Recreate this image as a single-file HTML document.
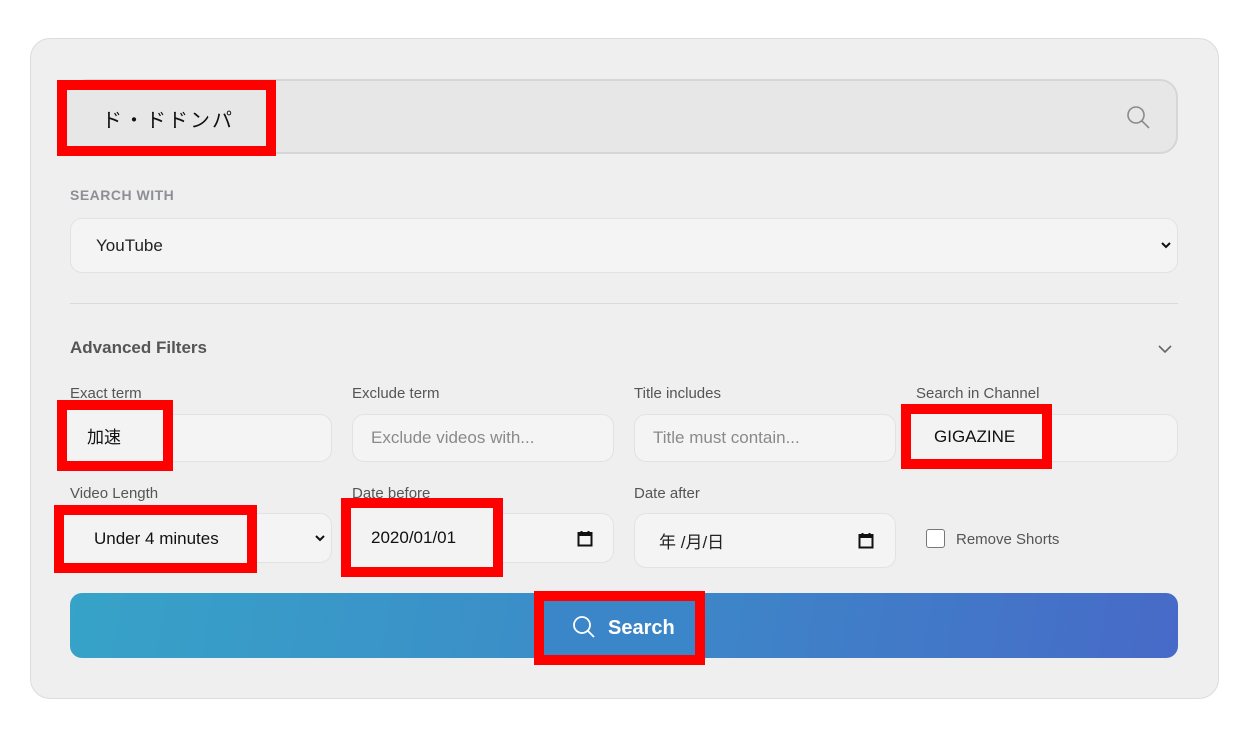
<!DOCTYPE html>
<html><head><meta charset="utf-8"><style>
*{box-sizing:border-box;margin:0;padding:0}
body{width:1254px;height:735px;background:#fff;font-family:"Liberation Sans","Noto Sans CJK JP",sans-serif;position:relative;overflow:hidden}
.a{position:absolute}
.card{left:30px;top:38px;width:1189px;height:661px;background:#efefef;border:1px solid #dcdcdc;border-radius:20px}
.inp{background:#f4f4f4;border:1px solid #e2e2e2;border-radius:12px;font-size:17px;color:#222;display:flex;align-items:center;padding-left:18px}
.ph{color:#8a8a8a}
.lab{font-size:15px;color:#555}
.red{border:10px solid #ff0000;background:#f3f3f3;display:flex;align-items:center;font-size:17px;color:#111}
</style></head><body>
<div class="a card"></div>
<div class="a" style="left:70px;top:79px;width:1108px;height:75px;background:#e7e7e7;border:2px solid #d6d6d6;border-radius:18px"></div>
<svg class="a" style="left:1125px;top:104px" width="26" height="26" viewBox="0 0 26 26"><circle cx="11" cy="11" r="8" fill="none" stroke="#8a8a8a" stroke-width="1.6"/><path d="M17 17l7 7" stroke="#8a8a8a" stroke-width="1.6"/></svg>
<div class="a red" style="left:57px;top:80px;width:219px;height:76px;background:#e7e7e7;padding-left:35px;font-size:20px;letter-spacing:2px">ド・ドドンパ</div>

<div class="a" style="left:70px;top:187px;font-size:14px;font-weight:bold;color:#8d8f95;letter-spacing:.5px">SEARCH WITH</div>
<div class="a inp" style="left:70px;top:218px;width:1108px;height:55px;padding-left:25px">YouTube</div>
<svg class="a" style="left:1160px;top:240px" width="12" height="10" viewBox="0 0 12 10"><path d="M2 3l4 4 4-4" fill="none" stroke="#111" stroke-width="2"/></svg>
<div class="a" style="left:70px;top:303px;width:1108px;height:1px;background:#dadada"></div>

<div class="a" style="left:70px;top:338px;font-size:17px;font-weight:bold;color:#555">Advanced Filters</div>
<svg class="a" style="left:1157px;top:343px" width="16" height="12" viewBox="0 0 16 12"><path d="M2 3l6 6 6-6" fill="none" stroke="#666" stroke-width="1.6"/></svg>

<div class="a lab" style="left:70px;top:385px">Exact term</div>
<div class="a lab" style="left:352px;top:385px">Exclude term</div>
<div class="a lab" style="left:634px;top:385px">Title includes</div>
<div class="a lab" style="left:916px;top:385px">Search in Channel</div>
<div class="a inp" style="left:70px;top:414px;width:262px;height:48px"></div>
<div class="a inp ph" style="left:352px;top:414px;width:262px;height:48px">Exclude videos with...</div>
<div class="a inp ph" style="left:634px;top:414px;width:262px;height:48px">Title must contain...</div>
<div class="a inp" style="left:916px;top:414px;width:262px;height:48px"></div>
<div class="a red" style="left:57px;top:400px;width:116px;height:71px;padding-left:20px">加速</div>
<div class="a red" style="left:901px;top:404px;width:151px;height:65px;padding-left:23px">GIGAZINE</div>

<div class="a lab" style="left:70px;top:485px">Video Length</div>
<div class="a lab" style="left:352px;top:485px">Date before</div>
<div class="a lab" style="left:634px;top:485px">Date after</div>
<div class="a inp" style="left:70px;top:513px;width:262px;height:50px"></div>
<svg class="a" style="left:314px;top:533px" width="12" height="10" viewBox="0 0 12 10"><path d="M2 3l4 4 4-4" fill="none" stroke="#111" stroke-width="2"/></svg>
<div class="a inp" style="left:352px;top:513px;width:262px;height:50px"></div>
<div class="a inp" style="left:634px;top:513px;width:262px;height:55px;padding-left:24px">年 /月/日</div>
<svg class="a" style="left:577px;top:530px" width="16" height="17" viewBox="0 0 16 17"><rect x="1.5" y="3" width="13" height="12.5" fill="none" stroke="#111" stroke-width="2"/><rect x="1.5" y="3" width="13" height="3" fill="#111"/><path d="M4.5 1v3M11.5 1v3" stroke="#111" stroke-width="2"/></svg>
<svg class="a" style="left:858px;top:532px" width="16" height="17" viewBox="0 0 16 17"><rect x="1.5" y="3" width="13" height="12.5" fill="none" stroke="#111" stroke-width="2"/><rect x="1.5" y="3" width="13" height="3" fill="#111"/><path d="M4.5 1v3M11.5 1v3" stroke="#111" stroke-width="2"/></svg>
<div class="a red" style="left:54px;top:505px;width:203px;height:68px;padding-left:30px">Under 4 minutes</div>
<div class="a red" style="left:341px;top:498px;width:162px;height:79px;padding-left:20px">2020/01/01</div>
<div class="a" style="left:926px;top:529px;width:19px;height:19px;border:1.5px solid #777;border-radius:3px;background:#fff"></div>
<div class="a" style="left:956px;top:531px;font-size:15px;color:#555">Remove Shorts</div>

<div class="a" style="left:70px;top:593px;width:1108px;height:65px;border-radius:12px;background:linear-gradient(100deg,#37a3c8 0%,#3c8ac8 50%,#476ac8 100%)"></div>
<div class="a red" style="left:534px;top:591px;width:171px;height:74px;background:#3b86c8;color:#fff;font-weight:bold;font-size:20px;padding-left:64px">Search</div>
<svg class="a" style="left:571px;top:614px" width="26" height="26" viewBox="0 0 26 26"><circle cx="11" cy="11" r="8" fill="none" stroke="#fff" stroke-width="1.8"/><path d="M17 17l6 6" stroke="#fff" stroke-width="1.8"/></svg>
</body></html>
